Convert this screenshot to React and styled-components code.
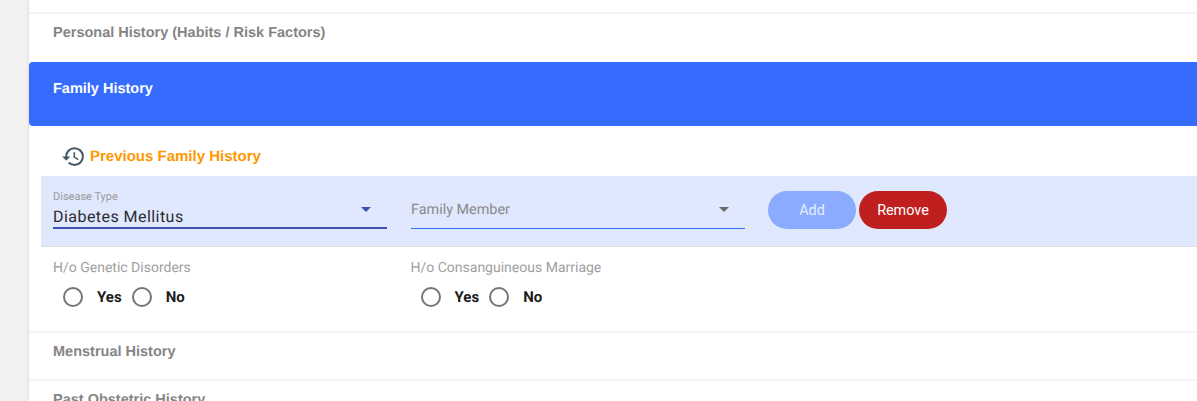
import React from 'react';
import styled, { createGlobalStyle } from 'styled-components';
import { MdHistory } from 'react-icons/md';

const GlobalStyle = createGlobalStyle`
  html, body {
    margin: 0;
    padding: 0;
    height: 401px;
    overflow: hidden;
    background: #fff;
    font-family: Roboto, "Liberation Sans", sans-serif;
    text-rendering: geometricPrecision;
  }
`;

const Page = styled.div`
  display: flex;
  height: 401px;
  overflow: hidden;
  background: #f1f1ef;
`;

const Panel = styled.div`
  flex: 1;
  margin-left: 29px;
  background: #fff;
  box-shadow: -1px 0 2px rgba(0, 0, 0, 0.08);
`;

const TopGap = styled.div`
  height: 12px;
`;

const Section = styled.div`
  height: ${(p) => p.$height}px;
  box-sizing: border-box;
  padding: 11px 24px 0;
  border-top: 2px solid #f5f5f5;
  font-size: 14.5px;
  line-height: 16px;
  font-weight: 700;
  color: #858585;
  font-family: "Liberation Sans", Arial, sans-serif;
`;

const ActiveHeader = styled.div`
  height: 64px;
  box-sizing: border-box;
  padding: 19px 24px 0;
  background: #356cfe;
  border-radius: 4px 0 0 4px;
  font-size: 14.5px;
  line-height: 16px;
  font-weight: 700;
  color: #fff;
  font-family: "Liberation Sans", Arial, sans-serif;
`;

const Body = styled.div`
  height: 205px;
  box-sizing: border-box;
  padding: 0 0 0 12px;
`;

const PreviousRow = styled.div`
  display: flex;
  align-items: center;
  height: 50px;
  box-sizing: border-box;
  padding: 10px 0 0 20px;
  gap: 4px;
  font-size: 15px;
  font-weight: 700;
  color: #ff9800;
  font-family: "Liberation Sans", Arial, sans-serif;
  svg {
    color: #455a64;
    flex: none;
  }
`;

const FormBand = styled.div`
  display: flex;
  align-items: flex-start;
  height: 71px;
  box-sizing: border-box;
  padding-left: 12px;
  background: #e0e8fd;
  border-bottom: 1px solid #dcdee2;
`;

const Field = styled.div`
  position: relative;
  width: 334px;
  height: 53px;
  margin-right: ${(p) => p.$gap}px;
  box-sizing: border-box;
  border-bottom: ${(p) => (p.$filled ? '2px solid #3f51b5' : '1px solid #356cfe')};
`;

const FloatLabel = styled.div`
  padding-top: 14px;
  font-size: 11px;
  line-height: 13px;
  color: #9a9a9a;
`;

const FieldValue = styled.div`
  margin-top: 4px;
  font-size: 16px;
  line-height: 19px;
  letter-spacing: 0.45px;
  color: #2b2b33;
`;

const Placeholder = styled.div`
  padding-top: 25px;
  font-size: 14.4px;
  line-height: 18px;
  color: #8a8a8a;
`;

const Caret = styled.span`
  position: absolute;
  right: 16px;
  top: 31px;
  width: 0;
  height: 0;
  border-left: 5px solid transparent;
  border-right: 5px solid transparent;
  border-top: 5px solid ${(p) => p.$color};
`;

const Actions = styled.div`
  display: flex;
  gap: 3px;
  padding-top: 15px;
`;

const Pill = styled.button`
  width: ${(p) => p.$width}px;
  height: 38px;
  padding: 0;
  border: none;
  border-radius: 19px;
  background: ${(p) => p.$bg};
  color: ${(p) => p.$color};
  font-family: Roboto, sans-serif;
  font-size: 14.4px;
`;

const Questions = styled.div`
  display: flex;
  padding: 13px 0 0 12px;
`;

const Question = styled.div`
  width: 357.5px;
`;

const QuestionLabel = styled.div`
  font-size: 14px;
  line-height: 16px;
  color: #a0a0a0;
`;

const RadioRow = styled.div`
  display: flex;
  align-items: center;
  margin-top: 11px;
  padding-left: 10px;
`;

const Radio = styled.span`
  width: 20px;
  height: 20px;
  box-sizing: border-box;
  border: 2px solid #757575;
  border-radius: 50%;
`;

const RadioText = styled.span`
  width: ${(p) => p.$width}px;
  padding-left: 14px;
  box-sizing: border-box;
  font-size: 15px;
  font-weight: 700;
  color: #1c1c1c;
  font-family: Roboto, sans-serif;
`;

const RadioGroup = () => (
  <RadioRow>
    <Radio />
    <RadioText $width={48.7}>Yes</RadioText>
    <Radio />
    <RadioText $width={50}>No</RadioText>
  </RadioRow>
);

export default function App() {
  return (
    <>
      <GlobalStyle />
      <Page>
        <Panel>
          <TopGap />
          <Section $height={50}>Personal History (Habits / Risk Factors)</Section>
          <ActiveHeader>Family History</ActiveHeader>
          <Body>
            <PreviousRow>
              <MdHistory size={25} />
              Previous Family History
            </PreviousRow>
            <FormBand>
              <Field $filled $gap={24}>
                <FloatLabel>Disease Type</FloatLabel>
                <FieldValue>Diabetes Mellitus</FieldValue>
                <Caret $color="#3f51b5" />
              </Field>
              <Field $gap={23}>
                <Placeholder>Family Member</Placeholder>
                <Caret $color="#6b6b6b" />
              </Field>
              <Actions>
                <Pill $width={88} $bg="#8aabfe" $color="#e6edff">Add</Pill>
                <Pill $width={88} $bg="#c01f1f" $color="#fff">Remove</Pill>
              </Actions>
            </FormBand>
            <Questions>
              <Question>
                <QuestionLabel>H/o Genetic Disorders</QuestionLabel>
                <RadioGroup />
              </Question>
              <Question>
                <QuestionLabel>H/o Consanguineous Marriage</QuestionLabel>
                <RadioGroup />
              </Question>
            </Questions>
          </Body>
          <Section $height={48}>Menstrual History</Section>
          <Section $height={48}>Past Obstetric History</Section>
        </Panel>
      </Page>
    </>
  );
}
